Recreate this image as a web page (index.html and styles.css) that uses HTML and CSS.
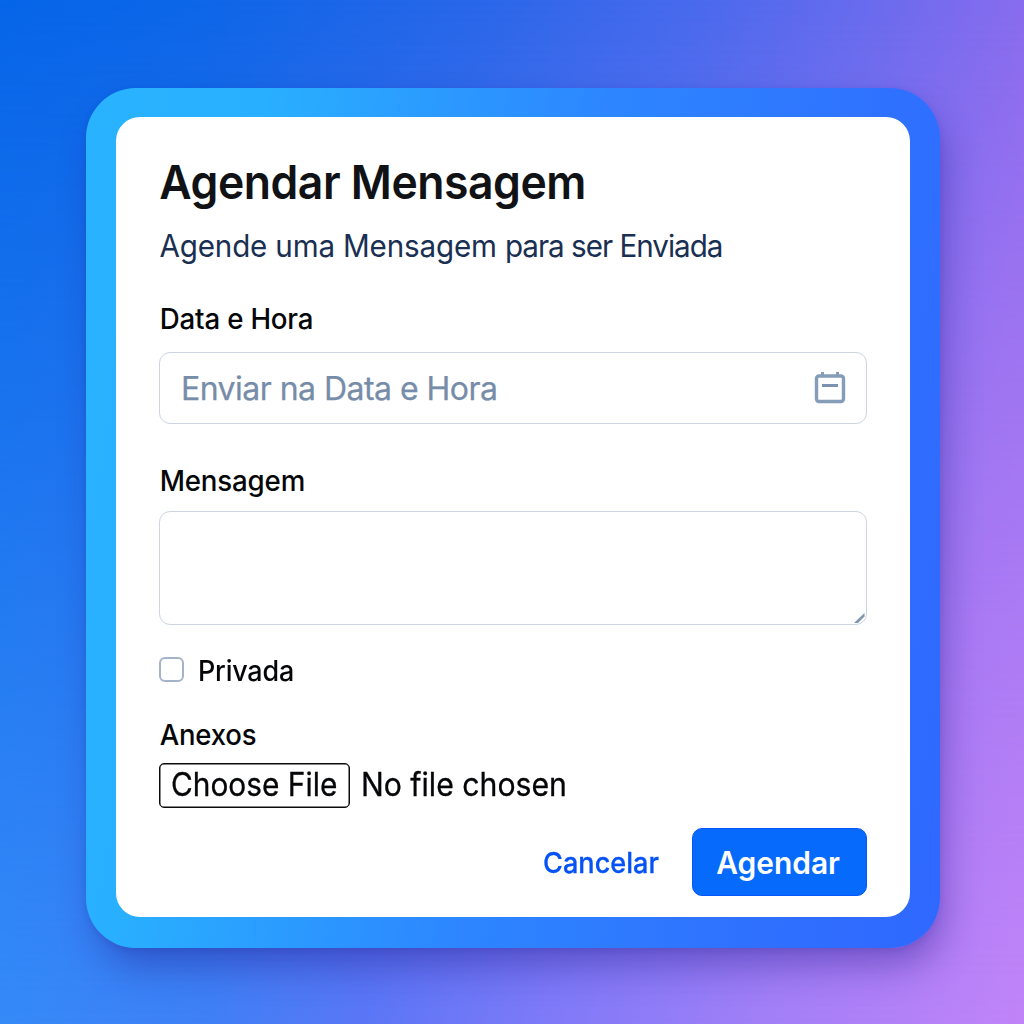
FILE: index.html
```html
<!DOCTYPE html>
<html lang="pt-BR">
<head>
<meta charset="utf-8">
<title>Agendar Mensagem</title>
<link rel="stylesheet" href="styles.css">
</head>
<body>
<main class="frame">
  <form class="card">
    <h1 class="title">Agendar Mensagem</h1>
    <p class="subtitle">Agende uma Mensagem <span class="subtitle-tail">para ser Enviada</span></p>

    <label class="label label-date">Data e Hora</label>
    <div class="date-field">
      <span class="placeholder">Enviar na Data e Hora</span>
      <svg class="calendar" width="32" height="34" viewBox="0 0 32 34" fill="none">
        <rect x="2.5" y="5" width="27" height="25.500" rx="2.5" stroke="#869db9" stroke-width="3.400"/>
        <path d="M8.5 1v4.500M23.5 1v4.500" stroke="#869db9" stroke-width="3"/>
        <path d="M8 14.500h16" stroke="#7b93b0" stroke-width="3"/>
      </svg>
    </div>

    <label class="label label-message">Mensagem</label>
    <div class="message-field">
      <svg class="grip" width="12" height="12" viewBox="0 0 12 12"><path d="M0 11 10.500 1V4.500L4 11Z" fill="#7f95b0"/></svg>
    </div>

    <div class="private-row">
      <span class="checkbox"></span>
      <span class="label label-private">Privada</span>
    </div>

    <label class="label label-files">Anexos</label>
    <div class="file-row">
      <span class="file-button"><span class="file-button-text">Choose File</span></span>
      <span class="file-status">No file chosen</span>
    </div>

    <div class="actions">
      <span class="cancel">Cancelar</span>
      <span class="submit"><span class="submit-text">Agendar</span></span>
    </div>
  </form>
</main>
</body>
</html>
```
FILE: styles.css
```css
* { box-sizing: border-box; }

body {
  margin: 0;
  width: 1024px;
  height: 1024px;
  padding: 88px 84px 76px 86px;
  overflow: hidden;
  position: relative;
  isolation: isolate;
  font-family: Inter, "Liberation Sans", sans-serif;
  color: #050608;
  background: linear-gradient(96deg, #0665e8 0%, #0e66e8 18%, #2967e9 42%, #486aed 61%, #706bee 80%, #8c6cee 92%);
}

/* lower half of the backdrop fades to lighter tones */
body::before {
  content: "";
  position: absolute;
  inset: 0;
  z-index: -1;
  background: linear-gradient(90deg, #358af8 0%, #3f80f6 20%, #5b76f6 36%, #827af8 55%, #a47ff7 76%, #c184f8 100%);
  mask-image: linear-gradient(180deg, transparent 0%, #000 100%);
}

.frame {
  width: 854px;
  height: 860px;
  padding: 29px 30px 31px;
  border-radius: 50px;
  background: linear-gradient(100deg, #29b3ff 0%, #29afff 18%, #2d86ff 52%, #2f71ff 80%, #2f68ff 100%);
  box-shadow: 7px 22px 38px -6px rgba(32, 20, 130, .42), 0 2px 6px rgba(40, 30, 150, .12);
}

.card {
  display: flex;
  flex-direction: column;
  height: 800px;
  padding: 37px 43px 21px;
  border-radius: 24px;
  background: #fff;
  white-space: nowrap;
}

/* text is set slightly condensed */
.title,
.subtitle,
.label,
.file-status {
  transform-origin: left center;
}

.title {
  margin: 0;
  font-size: 47px;
  line-height: 56px;
  font-weight: 600;
  letter-spacing: -.5px;
  color: #101215;
  transform: translateX(.3px) scaleX(.947);
}

.subtitle {
  margin: 16px 0 0;
  font-size: 31px;
  line-height: 40px;
  font-weight: 400;
  letter-spacing: -.18px;
  color: #1a3052;
  transform: translateX(.5px) scaleX(.955);
}

.subtitle-tail { letter-spacing: -1.05px; }

.label {
  font-size: 28.5px;
  line-height: 36px;
  font-weight: 500;
  letter-spacing: -.2px;
  transform: translateX(.7px) scaleX(.972);
}

.label-date { margin-top: 35px; }
.label-message { margin-top: 39px; }
.label-files { margin-top: 28px; transform: translateX(.7px) scaleX(.965); }
.label-private { transform: scaleX(.945); }

.date-field {
  display: flex;
  align-items: center;
  justify-content: space-between;
  height: 72px;
  margin-top: 15px;
  padding: 0 20px 0 21px;
  border: 1px solid #ccd5e0;
  border-radius: 11px;
}

.placeholder {
  font-size: 32px;
  letter-spacing: -.53px;
  color: #768ca8;
  -webkit-text-stroke: .25px #768ca8;
}

.message-field {
  display: flex;
  align-items: flex-end;
  justify-content: flex-end;
  height: 114px;
  margin-top: 12px;
  border: 1px solid #ccd5e0;
  border-radius: 11px;
}

.private-row {
  display: flex;
  align-items: center;
  gap: 14px;
  height: 36px;
  margin-top: 28px;
}

.checkbox {
  width: 25px;
  height: 25px;
  margin-bottom: 3px;
  border: 2px solid #a5b3c9;
  border-radius: 6px;
}

.file-row {
  display: flex;
  align-items: center;
  gap: 11px;
  height: 45px;
  margin-top: 10px;
  font-size: 32px;
  line-height: 42px;
  -webkit-text-stroke: .3px #050608;
}

.file-button {
  display: flex;
  align-items: center;
  justify-content: center;
  width: 191px;
  height: 45px;
  border: 1px solid #0b0b0b;
  border-radius: 5px;
  box-shadow: inset 0 0 0 .5px #0b0b0b;
}

.file-button-text,
.file-status {
  position: relative;
  top: -1px;
}

.file-button-text { transform: scaleX(.933); }
.file-status { transform: scaleX(.944); }

.actions {
  display: flex;
  align-items: center;
  justify-content: flex-end;
  gap: 33px;
  height: 68px;
  margin-top: 20px;
}

.cancel {
  font-size: 29px;
  font-weight: 500;
  color: #0552f5;
  -webkit-text-stroke: .3px #0552f5;
  transform: scaleX(.935);
  transform-origin: right center;
}

.submit {
  display: flex;
  align-items: center;
  justify-content: center;
  width: 175px;
  height: 68px;
  border: 1px solid #0757f8;
  border-radius: 10px;
  background: #066bfd;
  color: #fff;
  font-size: 31px;
  font-weight: 600;
}

.submit-text { transform: translateX(-1px) scaleX(.965); }
```
